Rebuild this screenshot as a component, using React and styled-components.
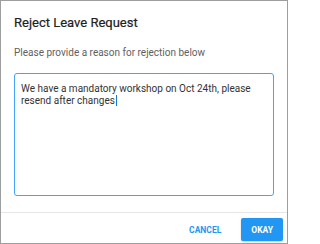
import React from "react";
import styled, { createGlobalStyle } from "styled-components";

const GlobalStyle = createGlobalStyle`
  body {
    margin: 0;
    background: #ffffff;
    font-family: Roboto, "Liberation Sans", Arial, sans-serif;
  }
`;

const Dialog = styled.div`
  width: 288px;
  height: 244px;
  box-sizing: border-box;
  border: 1px solid #9e9e9e;
  background: #fff;
  display: flex;
  flex-direction: column;
`;

const Body = styled.div`
  flex: 1;
  display: flex;
  flex-direction: column;
  padding: 14px 13px 16px;
`;

const Title = styled.h2`
  margin: 0;
  font-size: 13px;
  line-height: 16px;
  font-weight: 400;
  color: #212121;
  -webkit-text-stroke: 0.2px #212121;
`;

const Hint = styled.p`
  margin: 16px 0 0;
  font-size: 10px;
  line-height: 12px;
  color: #5f5f5f;
`;

const Reason = styled.div`
  margin-top: 14px;
  flex: 1;
  box-sizing: border-box;
  border: 1.5px solid #42a5f5;
  border-radius: 3px;
  padding: 9px 6px;
  font-size: 10px;
  line-height: 11.5px;
  color: #333;
`;

const Caret = styled.span`
  display: inline-block;
  width: 1px;
  height: 11px;
  margin-left: 1px;
  background: #1976d2;
  vertical-align: -2px;
`;

const Footer = styled.div`
  border-top: 1px solid #e6e6e6;
  display: flex;
  justify-content: flex-end;
  align-items: center;
  gap: 20px;
  padding: 5px 4px 2px;
`;

const Button = styled.button`
  border: none;
  border-radius: 2px;
  height: 23px;
  padding: 0 ${(p) => (p.$primary ? "10px" : "0")};
  background: ${(p) => (p.$primary ? "#2196f3" : "transparent")};
  color: ${(p) => (p.$primary ? "#fff" : "#2196f3")};
  font-family: Roboto, "Liberation Sans", Arial, sans-serif;
  font-size: 8.5px;
  font-weight: 700;
  box-shadow: ${(p) => (p.$primary ? "0 1px 2px rgba(0,0,0,0.2)" : "none")};
`;

export default function App() {
  return (
    <>
      <GlobalStyle />
      <Dialog>
        <Body>
          <Title>Reject Leave Request</Title>
          <Hint>Please provide a reason for rejection below</Hint>
          <Reason>
            We have a mandatory workshop on Oct 24th, please resend after
            changes
            <Caret />
          </Reason>
        </Body>
        <Footer>
          <Button>CANCEL</Button>
          <Button $primary>OKAY</Button>
        </Footer>
      </Dialog>
    </>
  );
}
